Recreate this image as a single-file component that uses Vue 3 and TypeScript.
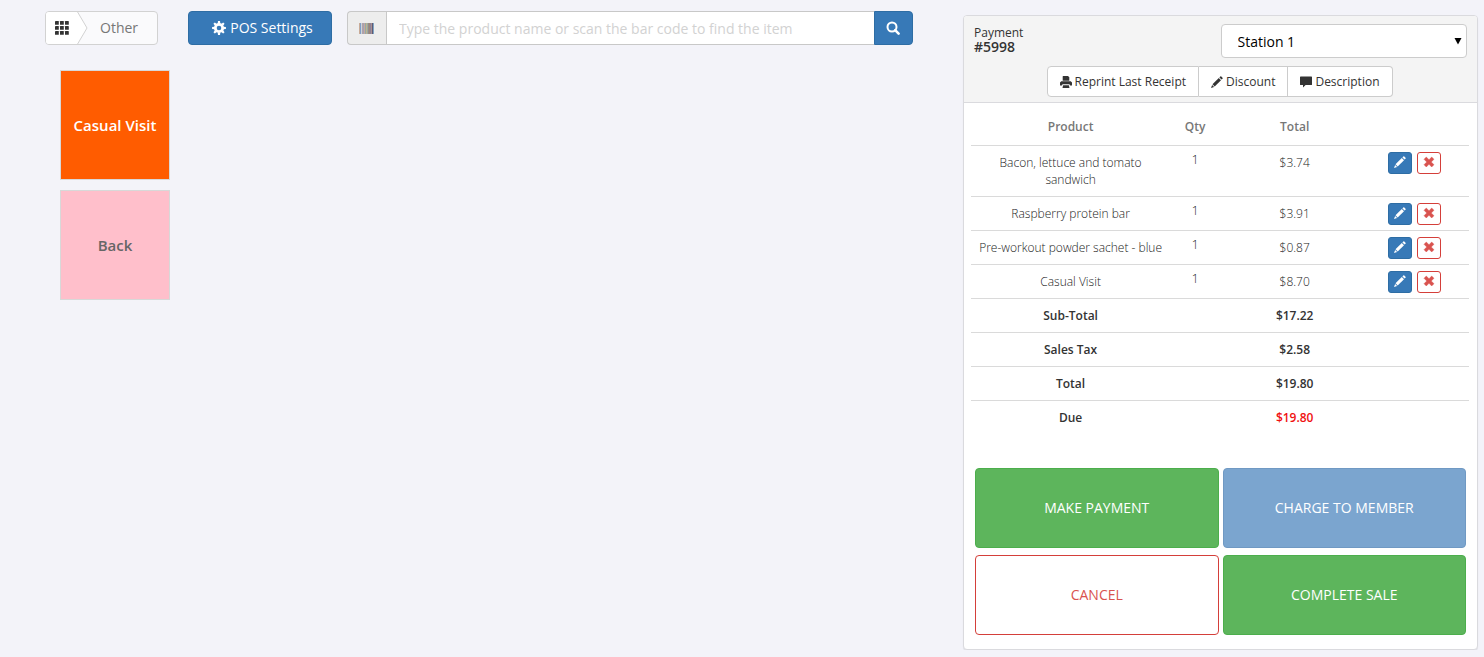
<script setup lang="ts">
import { ref } from 'vue'

interface LineItem {
  name: string
  qty: number
  total: string
}

interface SummaryRow {
  label: string
  amount: string
  due?: boolean
}

const search = ref('')
const station = ref('Station 1')

const items = ref<LineItem[]>([
  { name: 'Bacon, lettuce and tomato sandwich', qty: 1, total: '$3.74' },
  { name: 'Raspberry protein bar', qty: 1, total: '$3.91' },
  { name: 'Pre-workout powder sachet - blue', qty: 1, total: '$0.87' },
  { name: 'Casual Visit', qty: 1, total: '$8.70' },
])

const summary: SummaryRow[] = [
  { label: 'Sub-Total', amount: '$17.22' },
  { label: 'Sales Tax', amount: '$2.58' },
  { label: 'Total', amount: '$19.80' },
  { label: 'Due', amount: '$19.80', due: true },
]

const teeth = [0, 45, 90, 135, 180, 225, 270, 315]

const bars = [
  '#c9ab97', '#7fa0c6', '#cfd3dc', '#b0a5a5', '#a89fb5',
  '#c4ab9b', '#93a8a8', '#bfb291', '#9cab9f', '#948a8a',
  '#9c8579', '#8c8099', '#a8918f', '#5d5a78', '#7fa6c4',
]
</script>

<template>
  <div class="pos">
    <main class="catalog">
      <div class="toolbar">
        <nav class="crumbs" aria-label="Category">
          <a href="#" class="crumb-home" aria-label="All categories">
            <svg width="14" height="14" viewBox="0 0 14 14" fill="#333">
              <template v-for="r in 3" :key="r">
                <rect v-for="c in 3" :key="c" :x="(c - 1) * 5" :y="(r - 1) * 5" width="3.8" height="3.8" rx="0.4" />
              </template>
            </svg>
          </a>
          <svg class="crumb-arrow" width="11" height="32" viewBox="0 0 11 32">
            <path d="M0 0L10 16L0 32Z" fill="#fff" />
            <path d="M0 -1L10 16L0 33" fill="none" stroke="#d2d2d2" />
          </svg>
          <a href="#" class="crumb-current">Other</a>
        </nav>

        <button type="button" class="btn btn-primary settings">
          <svg width="14" height="14" viewBox="0 0 14 14" fill="none" stroke="#fff">
            <circle cx="7" cy="7" r="3.7" stroke-width="2.8" />
            <path v-for="a in teeth" :key="a" d="M5.7 2.6L6 0.1H8L8.3 2.6Z" fill="#fff" stroke="none" :transform="`rotate(${a} 7 7)`" />
          </svg>
          POS Settings
        </button>

        <form class="search" @submit.prevent>
          <label class="addon" for="product-search" aria-label="Product search">
            <svg width="15" height="11" viewBox="0 0 15 11" shape-rendering="crispEdges">
              <rect v-for="(color, i) in bars" :key="i" :x="i" y="0" width="1" height="11" :fill="color" />
            </svg>
          </label>
          <input id="product-search" v-model="search" type="text" placeholder="Type the product name or scan the bar code to find the item" />
          <button type="submit" class="btn btn-primary search-btn" aria-label="Search">
            <svg width="14" height="14" viewBox="0 0 14 14" fill="none" stroke="#fff">
              <circle cx="6" cy="6" r="4.5" stroke-width="2" />
              <path d="M9.2 9.2L12.6 12.6" stroke-width="2.6" stroke-linecap="round" />
            </svg>
          </button>
        </form>
      </div>

      <div class="tiles">
        <button type="button" class="tile tile-orange">Casual Visit</button>
        <button type="button" class="tile tile-pink">Back</button>
      </div>
    </main>

    <aside class="panel">
      <header class="panel-head">
        <div class="head-top">
          <div class="payment">
            <div>Payment</div>
            <strong>#5998</strong>
          </div>
          <div class="station">
            <select v-model="station" aria-label="Station">
              <option>Station 1</option>
            </select>
            <svg class="caret" width="8" height="8" viewBox="0 0 8 8"><path d="M0.5 1H7.5L4 7.5Z" fill="#000" /></svg>
          </div>
        </div>
        <div class="actions">
          <button type="button">
            <svg width="12" height="12" viewBox="0 0 12 12" fill="#333">
              <path d="M3 0H8L9.3 1.3V4.8H2.7V0.4Z" />
              <path d="M1.3 5.3H10.7L12 6.6V9.6H10L9.5 8.2H2.5L2 9.6H0V6.6Z" />
              <path d="M3.1 9.2H8.9L9.5 12H2.5Z" />
            </svg>
            Reprint Last Receipt
          </button>
          <button type="button">
            <svg width="12" height="12" viewBox="0 0 12 12" fill="#333">
              <path d="M9.3 0.5Q9.8 0 10.3 0.5L11.5 1.7Q12 2.2 11.5 2.7L10.6 3.6L8.4 1.4Z" />
              <path d="M7.8 2L10 4.2L3.7 10.4L1.5 8.3Z" />
              <path d="M1.1 8.9L3.1 10.9L0 12Z" />
            </svg>
            Discount
          </button>
          <button type="button">
            <svg width="12" height="12" viewBox="0 0 12 12" fill="#333">
              <path d="M0.6 0.6H11.4Q12 0.6 12 1.2V8.4Q12 9 11.4 9H5.6L3 11.6V9H0.6Q0 9 0 8.4V1.2Q0 0.6 0.6 0.6Z" />
            </svg>
            Description
          </button>
        </div>
      </header>

      <table class="lines">
        <thead>
          <tr>
            <th class="c-product" scope="col">Product</th>
            <th class="c-qty" scope="col">Qty</th>
            <th class="c-total" scope="col">Total</th>
            <td class="c-tools"></td>
          </tr>
        </thead>
        <tbody>
          <tr v-for="item in items" :key="item.name">
            <td>{{ item.name }}</td>
            <td class="qty">{{ item.qty }}</td>
            <td>{{ item.total }}</td>
            <td class="tools">
              <div class="tool-row">
                <button type="button" class="tool edit" :aria-label="`Edit ${item.name}`">
                  <svg width="12" height="12" viewBox="0 0 12 12" fill="#fff">
                    <path d="M9.3 0.5Q9.8 0 10.3 0.5L11.5 1.7Q12 2.2 11.5 2.7L10.6 3.6L8.4 1.4Z" />
                    <path d="M7.8 2L10 4.2L3.7 10.4L1.5 8.3Z" />
                    <path d="M1.1 8.9L3.1 10.9L0 12Z" />
                  </svg>
                </button>
                <button type="button" class="tool remove" :aria-label="`Remove ${item.name}`">
                  <svg width="12" height="12" viewBox="0 0 12 12" fill="#d9534f">
                    <path d="M3.3 1L6 3.7L8.7 1L11 3.3L8.3 6L11 8.7L8.7 11L6 8.3L3.3 11L1 8.7L3.7 6L1 3.3Z" stroke="#d9534f" stroke-width="0.4" stroke-linejoin="round" />
                  </svg>
                </button>
              </div>
            </td>
          </tr>
        </tbody>
        <tfoot>
          <tr v-for="row in summary" :key="row.label">
            <th scope="row">{{ row.label }}</th>
            <td></td>
            <td :class="{ due: row.due }">{{ row.amount }}</td>
            <td></td>
          </tr>
        </tfoot>
      </table>

      <div class="checkout">
        <button type="button" class="big green">MAKE PAYMENT</button>
        <button type="button" class="big blue" disabled>CHARGE TO MEMBER</button>
        <button type="button" class="big cancel">CANCEL</button>
        <button type="button" class="big green">COMPLETE SALE</button>
      </div>
    </aside>
  </div>
</template>

<style>
body {
  background: #f3f3f9;
}
</style>

<style scoped>
.pos,
.pos * {
  box-sizing: border-box;
}

.pos {
  display: grid;
  grid-template-columns: minmax(0, 868fr) minmax(0, 515fr);
  gap: 50px;
  align-items: start;
  padding: 0 6px 0 45px;
  font-family: 'Open Sans', sans-serif;
  font-size: 12px;
  line-height: 17px;
  color: #333;
}

button,
input,
select {
  font-family: inherit;
  margin: 0;
}

button {
  cursor: pointer;
}

svg {
  flex: none;
}

.catalog {
  padding-top: 11px;
}

.toolbar {
  display: flex;
  font-size: 14px;
  line-height: 20px;
}

.crumbs {
  display: flex;
  width: 113px;
  height: 34px;
  margin-right: 30px;
  border: 1px solid #d2d2d2;
  border-radius: 4px;
  background: #fafafc;
  overflow: hidden;
}

.crumb-home {
  display: flex;
  align-items: center;
  justify-content: flex-end;
  width: 31px;
  padding-right: 8px;
  background: #fff;
}

.crumb-current {
  flex: 1;
  padding: 6px 0 0 12px;
  color: #777;
  text-decoration: none;
}

.btn {
  display: flex;
  align-items: center;
  justify-content: center;
  height: 34px;
  font-size: 14px;
  line-height: 20px;
}

.btn-primary {
  color: #fff;
  background: #3779b7;
  border: 1px solid #2e6da4;
  border-radius: 4px;
}

.settings {
  gap: 4px;
  width: 144px;
  margin-right: 15px;
  padding: 0 0 0 5px;
}

.search {
  display: flex;
  flex: 1;
  min-width: 0;
}

.addon {
  display: flex;
  align-items: center;
  justify-content: center;
  width: 39px;
  padding-right: 2px;
  background: #ededed;
  border: 1px solid #c8c8c8;
  border-right: 0;
  border-radius: 4px 0 0 4px;
}

.search input {
  flex: 1;
  min-width: 0;
  height: 34px;
  padding: 0 12px;
  font-size: 14px;
  color: #555;
  background: #fff;
  border: 1px solid #c8c8c8;
  border-right: 0;
  border-radius: 0;
}

.search input::placeholder {
  color: #d2d2d2;
  opacity: 1;
}

.search-btn {
  width: 39px;
  padding: 0 2px 0 0;
  border-radius: 0 4px 4px 0;
}

.tiles {
  display: flex;
  flex-direction: column;
  gap: 10px;
  padding: 25px 0 0 15px;
}

.tile {
  width: 110px;
  height: 110px;
  padding: 0;
  border: 1px solid #d8d8d8;
  font-size: 15px;
  font-weight: 600;
  line-height: 20px;
}

.tile-orange {
  color: #fff;
  background: #ff5c00;
}

.tile-pink {
  color: #666;
  background: #ffbfcb;
}

.panel {
  margin-top: 15px;
  background: #fff;
  border: 1px solid #dadade;
  border-radius: 4px;
  box-shadow: 0 1px 1px rgba(0, 0, 0, 0.08);
}

.panel-head {
  padding: 8px 10px 5px;
  background: #f4f4f4;
  border-bottom: 1px solid #dadade;
  border-radius: 3px 3px 0 0;
}

.head-top {
  display: flex;
  justify-content: space-between;
}

.payment {
  padding-top: 1px;
  line-height: 15px;
}

.payment strong {
  display: block;
  font-size: 14px;
  font-weight: 600;
  line-height: 14px;
}

.station {
  position: relative;
  width: 50%;
}

.station select {
  width: 100%;
  height: 34px;
  padding: 0 16px;
  font-size: 14px;
  color: #000;
  background: #fff;
  border: 1px solid #ccc;
  border-radius: 4px;
  appearance: none;
}

.caret {
  position: absolute;
  top: 13px;
  right: 5px;
  pointer-events: none;
}

.actions {
  display: flex;
  justify-content: center;
  padding: 8px 2px 0 0;
}

.actions button {
  display: flex;
  align-items: center;
  gap: 3px;
  height: 31px;
  padding: 0 12px;
  font-size: 12px;
  color: #333;
  background: #fff;
  border: 1px solid #ccc;
}

.actions button + button {
  border-left: 0;
}

.actions button:first-child {
  border-radius: 4px 0 0 4px;
}

.actions button:last-child {
  border-radius: 0 4px 4px 0;
}

.lines {
  width: calc(100% - 15px);
  margin: 0 8px 0 7px;
  border-collapse: separate;
  border-spacing: 0;
  table-layout: fixed;
  text-align: center;
}

.lines th,
.lines td {
  padding: 8px;
  vertical-align: top;
}

.lines thead th {
  padding: 15px 0 10px;
  font-weight: 600;
  color: #777;
}

.c-product {
  width: 40%;
}

.c-qty {
  width: 10%;
}

.c-total {
  width: 30%;
}

.c-tools {
  width: 20%;
}

.lines tbody td,
.lines tfoot th,
.lines tfoot td {
  border-top: 1px solid #dadada;
}

.lines tbody td {
  font-weight: 300;
  color: #222;
}

.lines tbody .qty {
  padding-top: 5px;
}

.lines tbody .tools {
  padding: 6px 9px 5px 0;
}

.lines tfoot th,
.lines tfoot td {
  height: 34px;
  font-weight: 600;
}

.lines tfoot .due {
  color: #f01010;
}

.tool-row {
  display: flex;
  justify-content: center;
  gap: 5px;
}

.tool {
  display: flex;
  align-items: center;
  justify-content: center;
  width: 24px;
  height: 22px;
  padding: 0 0 2px;
  border-radius: 3px;
}

.edit {
  background: #3779b7;
  border: 1px solid #2e6da4;
}

.remove {
  background: #fff;
  border: 1px solid #d43f3a;
}

.checkout {
  display: grid;
  grid-template-columns: 1fr 1fr;
  gap: 7px 4px;
  padding: 34px 11px 14px;
}

.big {
  height: 80px;
  padding: 0;
  font-size: 14px;
  line-height: 20px;
  color: #fff;
  border-radius: 4px;
}

.green {
  background: #5db55c;
  border: 1px solid #4cae4c;
}

.blue {
  background: #7ba5cf;
  border: 1px solid #7099c3;
  cursor: not-allowed;
}

.cancel {
  color: #d9534f;
  background: #fff;
  border: 1px solid #d43f3a;
}
</style>
